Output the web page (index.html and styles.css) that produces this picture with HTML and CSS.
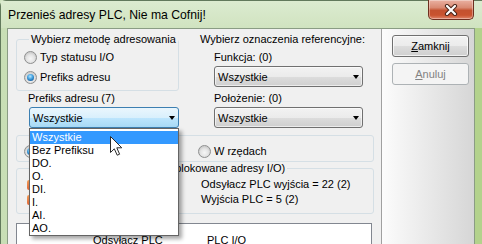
FILE: index.html
```html
<!DOCTYPE html>
<html lang="pl">
<head>
<meta charset="utf-8">
<title>Przenieś adresy PLC</title>
<link rel="stylesheet" href="styles.css">
</head>
<body>
<div class="window">
  <div class="titlebar">
    <span class="title">Przenieś adresy PLC, Nie ma Cofnij!</span>
    <div class="close-btn">
      <svg width="14" height="12" viewBox="0 0 14 12">
        <path d="M3 2 L11 10 M11 2 L3 10" stroke="#4a2418" stroke-width="4.2" stroke-linecap="round" fill="none"/>
        <path d="M3 2 L11 10 M11 2 L3 10" stroke="#ffffff" stroke-width="2.2" stroke-linecap="round" fill="none"/>
      </svg>
    </div>
  </div>
  <div class="client">
    <div class="main">
      <div class="top-row">
        <div class="col-left">
          <fieldset class="group g-method">
            <legend>Wybierz metodę adresowania</legend>
            <div class="radio-row"><span class="radio"></span><span>Typ statusu I/O</span></div>
            <div class="radio-row"><span class="radio checked"></span><span>Prefiks adresu</span></div>
          </fieldset>
          <div class="label prefix-label">Prefiks adresu (7)</div>
          <div class="combo-wrap">
            <div class="combo focused"><span>Wszystkie</span><span class="arrow"></span></div>
            <ul class="dropdown">
              <li class="sel">Wszystkie</li>
              <li>Bez Prefiksu</li>
              <li>DO.</li>
              <li>O.</li>
              <li>DI.</li>
              <li>I.</li>
              <li>AI.</li>
              <li>AO.</li>
            </ul>
            <svg class="cursor" width="13" height="20" viewBox="0 0 13 20">
              <path d="M0.5 0.5 L0.5 16.5 L4.3 12.8 L7.2 19.2 L9.6 18.2 L6.8 11.8 L11.8 11.8 Z" fill="#ffffff" stroke="#2a2a2a" stroke-width="1" stroke-linejoin="round"/>
            </svg>
          </div>
        </div>
        <div class="col-right">
          <div class="label">Wybierz oznaczenia referencyjne:</div>
          <div class="indent">
            <div class="label l-gap">Funkcja: (0)</div>
            <div class="combo wide"><span>Wszystkie</span><span class="arrow"></span></div>
            <div class="label l-gap">Położenie: (0)</div>
            <div class="combo wide"><span>Wszystkie</span><span class="arrow"></span></div>
          </div>
        </div>
      </div>
      <fieldset class="group g-sort">
        <legend>Sortowanie</legend>
        <div class="radio-row"><span class="radio checked"></span><span>W kolumnach</span></div>
        <div class="radio-row"><span class="radio"></span><span>W rzędach</span></div>
      </fieldset>
      <fieldset class="group g-info">
        <legend><span class="legend-head">Wyświetlane (odblokowane/za</span>blokowane adresy I/O)</legend>
        <div class="info-cell"><span class="mini-icon"></span>Wejścia = 0 (0)</div>
        <div class="info-cell">Odsyłacz PLC wyjścia = 22 (2)</div>
        <div class="info-cell"><span class="mini-icon"></span>Odsyłacz = 0 (0)</div>
        <div class="info-cell">Wyjścia PLC = 5 (2)</div>
      </fieldset>
      <div class="listview">
        <div class="lv-header"><span class="lv-col1">Odsyłacz PLC</span><span>PLC I/O</span></div>
      </div>
    </div>
    <div class="side">
      <button class="btn" type="button"><u>Z</u>amknij</button>
      <button class="btn disabled" type="button" disabled><u>A</u>nuluj</button>
    </div>
  </div>
</div>
</body>
</html>
```

FILE: styles.css
```css
html, body {
  margin: 0;
  padding: 0;
  width: 482px;
  height: 244px;
  overflow: hidden;
  background: #d2e5c3;
}

body {
  font-family: "Liberation Sans", Arial, sans-serif;
  font-size: 11px;
  color: #000;
}

.window {
  width: 482px;
  height: 262px;
  box-sizing: border-box;
  border-left: 1px solid #62795c;
  border-top: 1px solid #62795c;
  border-top-left-radius: 6px;
  background: linear-gradient(to right, #c8deb5 0, #d3e6c4 40%, #d0e3bf 97.2%, #b3d28c 98.4%, #b3d28c 100%);
  display: flex;
  flex-direction: column;
}

.titlebar {
  height: 27px;
  flex: none;
  display: flex;
  align-items: flex-start;
  padding: 0 8px 0 7px;
  background: linear-gradient(#dcebd0, #d0e3c0);
}

.title {
  margin-top: 7px;
  line-height: 14px;
  font-size: 12.2px;
  color: #000;
}

.close-btn {
  margin-left: auto;
  margin-top: -1px;
  width: 46px;
  height: 20px;
  box-sizing: border-box;
  border: 1px solid #6e2f20;
  border-top: none;
  border-radius: 0 0 5px 5px;
  background: linear-gradient(#eab1a2 0, #d98a73 40%, #c4512f 55%, #c9532f 80%, #e0856a 100%);
  box-shadow: inset 0 0 0 1px rgba(255, 255, 255, 0.35);
  display: flex;
  align-items: center;
  justify-content: center;
}

.client {
  flex: 1;
  margin-left: 6px;
  width: 468px;
  box-sizing: border-box;
  border: 1px solid #8a9c84;
  border-bottom: none;
  background: #f0f0f0;
  display: flex;
}

.main {
  width: 373px;
  flex: none;
  box-sizing: border-box;
  padding: 4px 0 0 8px;
}

.side {
  width: 93px;
  flex: none;
  box-sizing: border-box;
  border-left: 1px solid #a0a0a0;
  padding: 6px 0 0 10px;
  background: linear-gradient(to right, #fcfcfc, #d6d6d6);
  display: flex;
  flex-direction: column;
  gap: 6px;
}

.top-row {
  display: flex;
  gap: 21px;
}

.col-left {
  width: 163px;
  flex: none;
}

.col-right {
  flex: none;
}

.label {
  line-height: 13px;
  white-space: nowrap;
}

.indent {
  margin-left: 14px;
}

.l-gap {
  margin-top: 5px;
  margin-bottom: 2px;
}

.prefix-label {
  margin: 1px 0 2px 12px;
}

/* group boxes */
.group {
  margin: 0;
  padding: 0;
  min-width: 0;
  box-sizing: border-box;
  border: 1px solid #d5dfe5;
  border-radius: 3px;
}

.group legend {
  padding: 0 2px;
  margin-left: 5px;
  line-height: 13px;
  white-space: nowrap;
}

.legend-head {
  letter-spacing: -0.25px;
}

.g-method {
  width: 163px;
  padding: 1px 0 3px 7px;
}

.g-sort {
  width: 358px;
  margin-top: 1px;
  padding: 0 0 1px 7px;
  display: grid;
  grid-template-columns: 174px auto;
}

.g-sort .radio-row {
  height: 18px;
}

.g-info {
  width: 358px;
  padding: 2px 0 6px 10px;
  display: grid;
  grid-template-columns: 174px auto;
  line-height: 15px;
}

.info-cell {
  display: flex;
  align-items: center;
  white-space: nowrap;
}

.mini-icon {
  width: 10px;
  height: 10px;
  margin-right: 4px;
  border-radius: 2px;
  background: linear-gradient(135deg, #f3a35b, #d2361e);
}

/* radio buttons */
.radio-row {
  display: flex;
  align-items: center;
  gap: 3px;
  height: 20px;
  white-space: nowrap;
}

.radio {
  width: 13px;
  height: 13px;
  flex: none;
  box-sizing: border-box;
  border-radius: 50%;
  border: 1px solid #8e8f8f;
  background: radial-gradient(circle at 50% 60%, #f6f6f6 0, #e4e4e4 45%, #cdcdcd 70%, #f4f4f4 100%);
  position: relative;
}

.radio.checked::after {
  content: "";
  position: absolute;
  left: 2px;
  top: 2px;
  width: 7px;
  height: 7px;
  border-radius: 50%;
  background: radial-gradient(circle at 45% 35%, #b7e6ff 0, #4aa7e3 40%, #1a66a8 75%, #0e4d86 100%);
}

/* combos */
.combo {
  height: 21px;
  box-sizing: border-box;
  border: 1px solid #707070;
  border-radius: 3px;
  background: linear-gradient(#f2f2f2 0, #ebebeb 50%, #dddddd 50%, #cfcfcf 100%);
  box-shadow: inset 0 0 0 1px rgba(255, 255, 255, 0.6);
  display: flex;
  align-items: center;
  justify-content: space-between;
  padding: 0 3px;
  white-space: nowrap;
}

.combo.wide {
  width: 149px;
}

.combo.focused {
  border-color: #3c7fb1;
  background: linear-gradient(#eaf6fd 0, #d9f0fc 50%, #bee6fd 50%, #a7d9f5 100%);
  box-shadow: none;
}

.arrow {
  width: 0;
  height: 0;
  border-left: 3.5px solid transparent;
  border-right: 3.5px solid transparent;
  border-top: 4px solid #000;
  margin-top: 1px;
}

.combo-wrap {
  position: relative;
  width: 150px;
  margin-left: 13px;
}

.dropdown {
  position: absolute;
  left: 0;
  top: 21px;
  z-index: 2;
  width: 150px;
  box-sizing: border-box;
  margin: 0;
  padding: 2px 0 0 0;
  list-style: none;
  background: #fff;
  border: 1px solid #646464;
  box-shadow: 3px 3px 4px rgba(0, 0, 0, 0.35);
}

.dropdown li {
  height: 13px;
  line-height: 13px;
  padding-left: 2px;
  white-space: nowrap;
}

.dropdown li.sel {
  background: #3399ff;
  color: #fff;
}

.cursor {
  position: absolute;
  left: 81px;
  top: 29px;
  z-index: 3;
}

/* list view */
.listview {
  width: 356px;
  height: 60px;
  margin-top: 9px;
  box-sizing: border-box;
  border: 1px solid #828790;
  background: #fff;
}

.lv-header {
  display: flex;
  padding: 10px 0 0 76px;
  line-height: 13px;
  white-space: nowrap;
}

.lv-col1 {
  width: 114px;
}

/* buttons */
.btn {
  width: 77px;
  height: 22px;
  box-sizing: border-box;
  padding: 0;
  font: inherit;
  color: #000;
  border: 1px solid #707070;
  border-radius: 3px;
  background: linear-gradient(#f2f2f2 0, #ebebeb 50%, #dddddd 50%, #cfcfcf 100%);
  box-shadow: inset 0 0 0 1px rgba(255, 255, 255, 0.7);
}

.btn.disabled {
  color: #838383;
  border-color: #adb2b5;
  background: #f4f4f4;
  box-shadow: none;
}
```
